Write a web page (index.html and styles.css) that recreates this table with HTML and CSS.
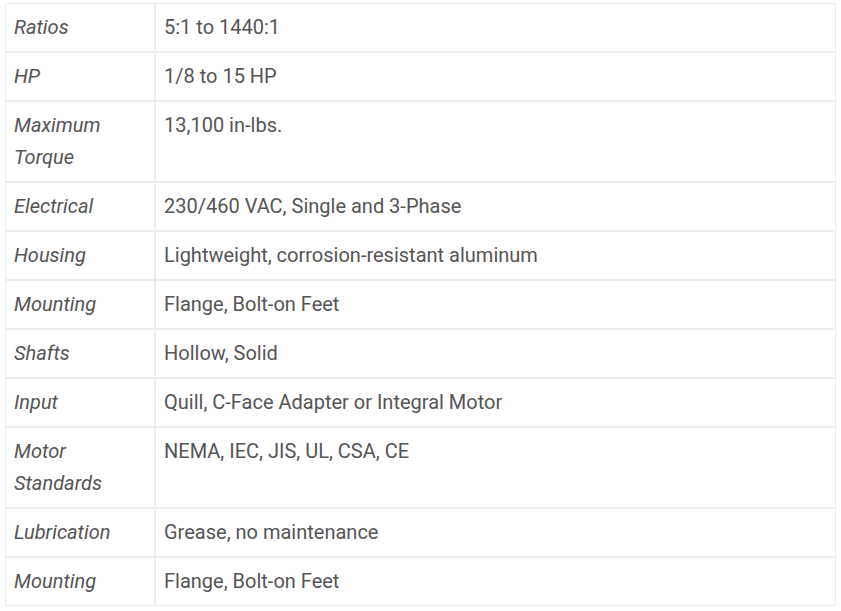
FILE: index.html
```html
<!DOCTYPE html>
<html>
<head>
<meta charset="utf-8">
<link rel="stylesheet" href="styles.css">
</head>
<body>
<table class="specs">
  <tbody>
    <tr><td class="label">Ratios</td><td class="value">5:1 to 1440:1</td></tr>
    <tr><td class="label">HP</td><td class="value">1/8 to 15 HP</td></tr>
    <tr><td class="label">Maximum Torque</td><td class="value">13,100 in-lbs.</td></tr>
    <tr><td class="label">Electrical</td><td class="value">230/460 VAC, Single and 3-Phase</td></tr>
    <tr><td class="label">Housing</td><td class="value">Lightweight, corrosion-resistant aluminum</td></tr>
    <tr><td class="label">Mounting</td><td class="value">Flange, Bolt-on Feet</td></tr>
    <tr><td class="label">Shafts</td><td class="value">Hollow, Solid</td></tr>
    <tr><td class="label">Input</td><td class="value">Quill, C-Face Adapter or Integral Motor</td></tr>
    <tr><td class="label">Motor Standards</td><td class="value">NEMA, IEC, JIS, UL, CSA, CE</td></tr>
    <tr><td class="label">Lubrication</td><td class="value">Grease, no maintenance</td></tr>
    <tr><td class="label">Mounting</td><td class="value">Flange, Bolt-on Feet</td></tr>
  </tbody>
</table>
</body>
</html>
```
FILE: styles.css
```css
html, body {
  margin: 0;
  padding: 0;
  background: #fff;
}
body {
  padding: 3px 0 0 5px;
  font-family: Roboto, "Liberation Sans", sans-serif;
  font-size: 20px;
  color: #555;
}
.specs {
  border-collapse: separate;
  border-spacing: 0;
  width: 831px;
}
.specs td {
  border: 1px solid #ededed;
  padding: 7px 8px 8px 8px;
  line-height: 32px;
  vertical-align: top;
  text-align: left;
}
.specs .label {
  width: 132px;
  font-style: italic;
}
```
